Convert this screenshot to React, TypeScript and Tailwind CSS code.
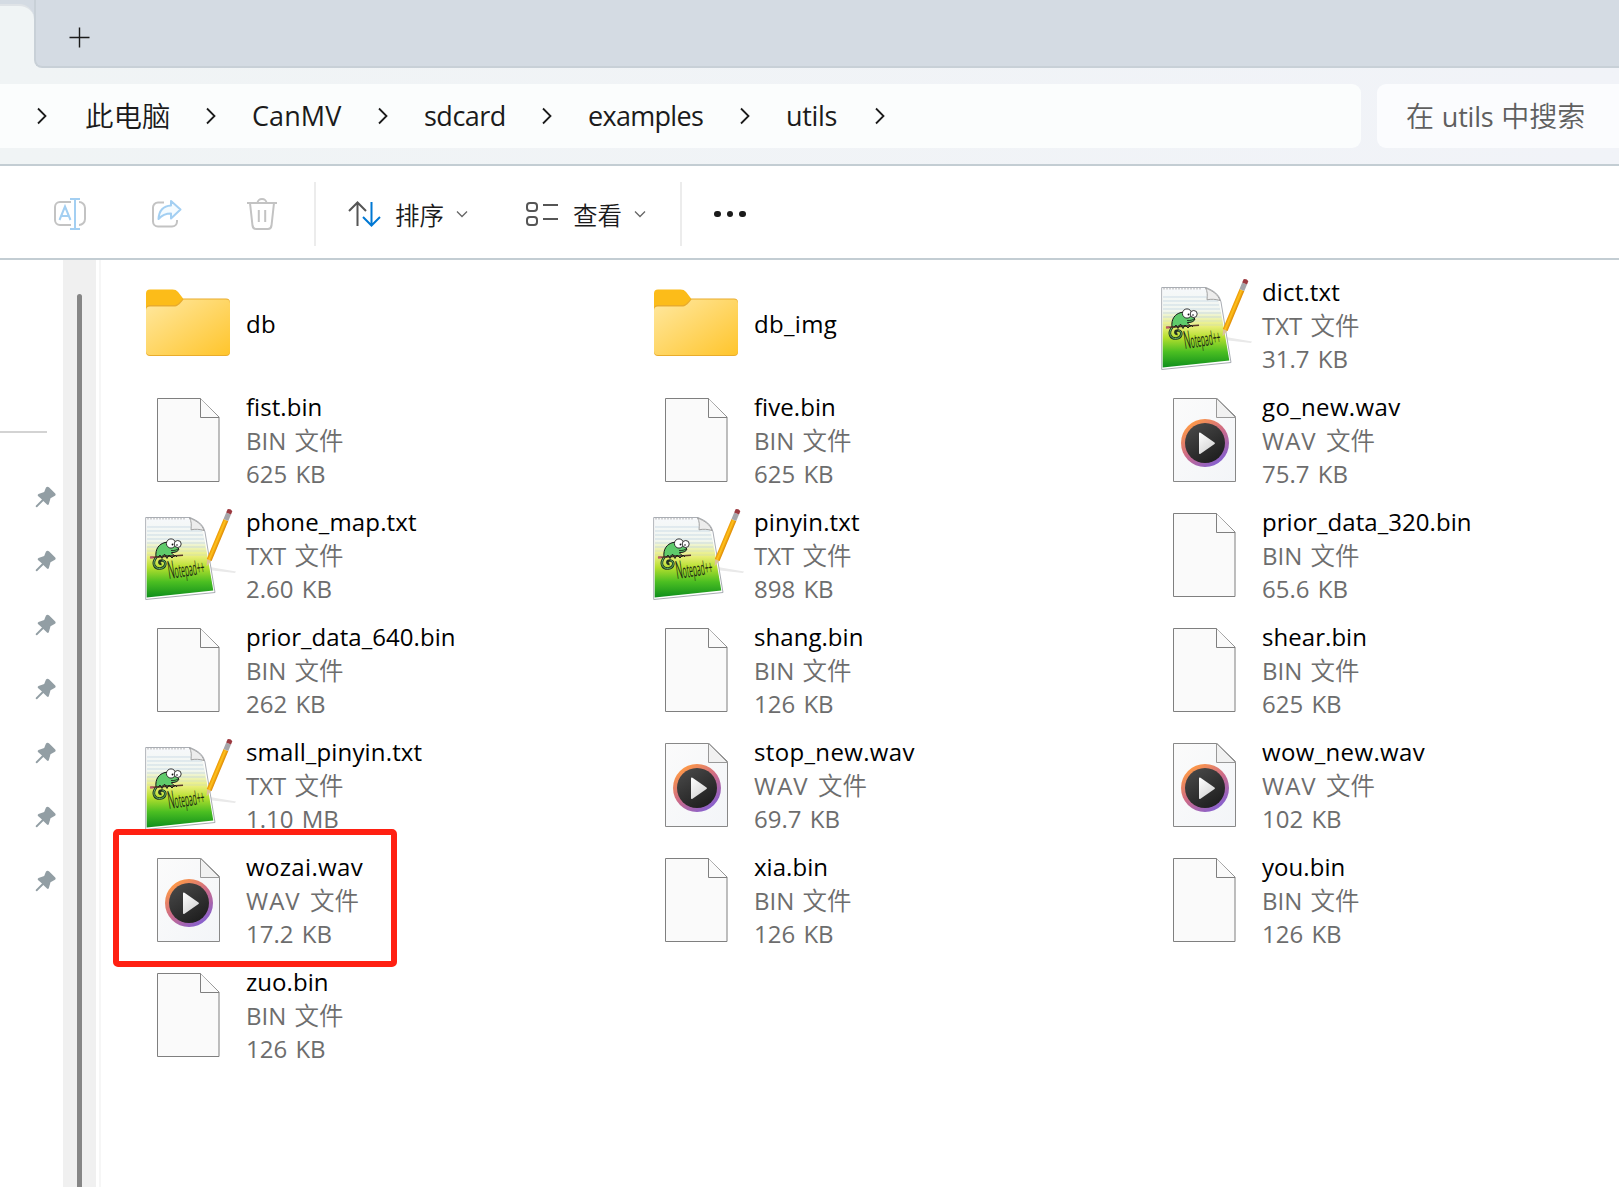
import React from "react";

const latin = "font-['Open_Sans','Noto_Sans_CJK_SC',sans-serif]";

type Kind = "folder" | "bin" | "wav" | "txt";

const files: { name: string; kind: Kind; size?: string; mark?: boolean }[] = [
  { name: "db", kind: "folder" },
  { name: "db_img", kind: "folder" },
  { name: "dict.txt", kind: "txt", size: "31.7 KB" },
  { name: "fist.bin", kind: "bin", size: "625 KB" },
  { name: "five.bin", kind: "bin", size: "625 KB" },
  { name: "go_new.wav", kind: "wav", size: "75.7 KB" },
  { name: "phone_map.txt", kind: "txt", size: "2.60 KB" },
  { name: "pinyin.txt", kind: "txt", size: "898 KB" },
  { name: "prior_data_320.bin", kind: "bin", size: "65.6 KB" },
  { name: "prior_data_640.bin", kind: "bin", size: "262 KB" },
  { name: "shang.bin", kind: "bin", size: "126 KB" },
  { name: "shear.bin", kind: "bin", size: "625 KB" },
  { name: "small_pinyin.txt", kind: "txt", size: "1.10 MB" },
  { name: "stop_new.wav", kind: "wav", size: "69.7 KB" },
  { name: "wow_new.wav", kind: "wav", size: "102 KB" },
  { name: "wozai.wav", kind: "wav", size: "17.2 KB", mark: true },
  { name: "xia.bin", kind: "bin", size: "126 KB" },
  { name: "you.bin", kind: "bin", size: "126 KB" },
  { name: "zuo.bin", kind: "bin", size: "126 KB" },
];

function Gradients() {
  return (
    <svg width="0" height="0" className="absolute">
      <defs>
        <linearGradient id="folder" x1="0" y1="0" x2="1" y2="1">
          <stop offset="0" stopColor="#ffe8a0" />
          <stop offset="1" stopColor="#ffc52c" />
        </linearGradient>
        <linearGradient id="ring" x1="0.15" y1="0.1" x2="0.75" y2="0.95">
          <stop offset="0" stopColor="#ff9a45" />
          <stop offset="0.5" stopColor="#cc6a88" />
          <stop offset="1" stopColor="#8660cf" />
        </linearGradient>
        <linearGradient id="disc" x1="0" y1="0" x2="0.6" y2="1">
          <stop offset="0" stopColor="#4c4c4c" />
          <stop offset="1" stopColor="#202020" />
        </linearGradient>
        <linearGradient id="play" x1="0" y1="0" x2="0.6" y2="1">
          <stop offset="0" stopColor="#ffffff" />
          <stop offset="1" stopColor="#d4d4d4" />
        </linearGradient>
        <linearGradient id="paper" x1="0" y1="0" x2="1" y2="1">
          <stop offset="0" stopColor="#fbfbfb" />
          <stop offset="1" stopColor="#f3f5f8" />
        </linearGradient>
        <linearGradient id="note" x1="0" y1="0" x2="0" y2="1">
          <stop offset="0" stopColor="#f6f8fb" />
          <stop offset="0.28" stopColor="#f1f6ef" />
          <stop offset="0.48" stopColor="#e8ee78" />
          <stop offset="0.62" stopColor="#b5df2e" />
          <stop offset="0.8" stopColor="#4cbf22" />
          <stop offset="1" stopColor="#0e8f1c" />
        </linearGradient>
        <linearGradient id="pencil" x1="0" y1="0" x2="1" y2="0">
          <stop offset="0" stopColor="#e89400" />
          <stop offset="0.45" stopColor="#ffc21e" />
          <stop offset="1" stopColor="#dc8600" />
        </linearGradient>
      </defs>
    </svg>
  );
}

function FolderIcon() {
  return (
    <svg width="96" height="96" viewBox="0 0 96 96">
      <path d="M6 16.500a4 4 0 0 1 4-4h22.500c2.600 0 4 .8 5.600 2.500l5 6.500L44 32H6z" fill="#fcbc19" />
      <path d="M6 32a4 4 0 0 1 4-4h24c3 0 4.500-1.500 9-6.500H86a4 4 0 0 1 4 4V75a4 4 0 0 1-4 4H10a4 4 0 0 1-4-4z" fill="#e9ac2c" />
      <path d="M6 33.500a4 4 0 0 1 4-4h24c3.500 0 5-1.500 9.500-7H86a4 4 0 0 1 4 4V74a4 4 0 0 1-4 4H10a4 4 0 0 1-4-4z" fill="url(#folder)" />
    </svg>
  );
}

function BinIcon() {
  return (
    <svg width="96" height="96" viewBox="0 0 96 96" fill="#fafafa" stroke="#7f7f7f">
      <path d="M17.500 6.500H60.500L79 25V89.500H17.500z" />
      <path d="M60.500 6.500V25.500H79" />
    </svg>
  );
}

function WavIcon() {
  return (
    <svg width="96" height="96" viewBox="0 0 96 96">
      <path d="M17.500 6.500H61L79.500 24.500V89.500H17.500z" fill="url(#paper)" stroke="#888" />
      <path d="M60.500 6.500V25.500H79.500z" fill="#f1f1f1" stroke="#999" />
      <circle cx="49" cy="51" r="24" fill="url(#ring)" />
      <circle cx="49" cy="51" r="20" fill="url(#disc)" />
      <path d="M43 41.500v19.500q0 1.600 1.500.800L58.500 52q1-.8 0-1.500L44.500 40.700q-1.500-.8-1.500.8z" fill="url(#play)" />
    </svg>
  );
}

function NotepadIcon() {
  return (
    <svg width="96" height="96" viewBox="0 0 96 96">
      <path d="M67 59.500L96 64.500 95 66 68 63z" fill="#e9e9e9" />
      <path d="M5.700 10.500H50C58 14 63 17 65 25L75 85.500 5.700 92.500z" fill="#fff" stroke="#a9adb3" strokeWidth="1" />
      <path d="M6.700 11.500H49.500C57 15 61.500 18 63.500 25.500L73.300 83.500 6.700 90.500z" fill="url(#note)" />
      <g stroke="#bcd0e0" strokeWidth="0.700">
        <path d="M7 20H51M7 24H62M7 28H63M7 32H64M7 36H65M7 40H65" />
        <path d="M7 44H66M7 48H67" opacity="0.500" />
      </g>
      <path d="M8 11v1.500M11 11v1.500M14 11v1.500M17 11v1.500M20 11v1.500M23 11v1.500M26 11v1.500M29 11v1.500M32 11v1.500M35 11v1.500M38 11v1.500M41 11v1.500M44 11v1.500" stroke="#aaa" strokeWidth="1" />
      <path d="M49.500 11C51.500 14 51.500 18 51 22.800c4-.9 9-.6 13 .7C62 17.500 57 14 49.500 11z" fill="#ededed" stroke="#999" strokeWidth="0.900" />
      <path d="M16.500 50C11 57 15 62 20.500 61.500s6.500-7.500 2-8-3.500 4-1 3.500" fill="none" stroke="#223322" strokeWidth="2.600" />
      <path d="M16.500 50C11 57 15 62 20.500 61.500s6.500-7.500 2-8" fill="none" stroke="#5fb95f" strokeWidth="1" />
      <path d="M16 50C15 42 19 37 25 35.500c3-.7 6 0 9 2l5 4.500c-1 2.800-4 3.600-7.500 3.500 1 2 2 2.500 3.500 3.500H27l-3-1.500-2 2z" fill="#5fca6b" stroke="#151515" strokeWidth="1" />
      <path d="M10 50.500L43 48.300" stroke="#5b3a2c" strokeWidth="1.600" />
      <path d="M10 50.500L13.500 50.300" stroke="#b9576a" strokeWidth="2.200" />
      <path d="M18 50.500l2-2.500 2 3.500 2.500-4 2.500 4 2-3.500 3 3 3-3 2 2" fill="none" stroke="#16231a" strokeWidth="1" />
      <path d="M31 43.500c3 .3 5.500-.3 8-2" fill="none" stroke="#151515" strokeWidth="0.800" />
      <circle cx="31" cy="36.500" r="4.600" fill="#fff" stroke="#222" strokeWidth="0.900" />
      <circle cx="37.700" cy="37" r="3.500" fill="#fff" stroke="#222" strokeWidth="0.900" />
      <circle cx="32.500" cy="37.500" r="0.900" fill="#111" />
      <circle cx="37" cy="38" r="0.800" fill="#111" />
      <text transform="translate(29 72) rotate(-8.500) scale(.36 1)" fontSize="19" textLength="102" lengthAdjust="spacingAndGlyphs" fill="#1c2a12" fontFamily="Open Sans"><tspan fontSize="25">N</tspan>otepad++</text>
      <g transform="translate(66.500 59.500) rotate(22.600)">
        <path d="M0 0L-2.500 -8H2.500z" fill="#dcc29a" />
        <path d="M-2.600 -7V-50.500H2.600V-7z" fill="url(#pencil)" />
        <path d="M-2.600 -50.500V-57.500H2.600V-50.500z" fill="#a5a5a9" />
        <path d="M-2.600 -57.500V-61q2.600-2 5.200 0V-57.500z" fill="#9c3a40" />
      </g>
    </svg>
  );
}

const icons: Record<Kind, () => React.ReactElement> = {
  folder: FolderIcon,
  bin: BinIcon,
  wav: WavIcon,
  txt: NotepadIcon,
};

const nameTracking: Record<Kind, string> = {
  folder: "tracking-[0.3px]",
  bin: "tracking-[0.05px]",
  wav: "tracking-[0.35px]",
  txt: "tracking-[0.15px]",
};

function Cell({ name, kind, size, mark }: (typeof files)[number]) {
  const Icon = icons[kind];
  return (
    <div className="relative flex h-[115px] pt-[9px]">
      <div className="size-24 shrink-0">
        <Icon />
      </div>
      <div className={`${size ? "-mt-[2px] h-[99px]" : "-mt-px h-24 pb-px"} ml-[10px] flex flex-col justify-center whitespace-nowrap text-[24px] leading-[33px] [font-kerning:none] [word-spacing:2px] text-[#6d6d6d]`}>
        <div className={`${size ? "h-[34px]" : "h-[33px]"} ${nameTracking[kind]} text-black`}>{name}</div>
        {size && (
          <div className="h-[33px]">
            <span className={kind === "wav" ? "tracking-[1px]" : ""}>{kind.toUpperCase()} </span>
            <span className="text-[24.5px] font-[350]">文件</span>
          </div>
        )}
        {size && <div className="h-8">{size}</div>}
      </div>
      {mark && <div className="absolute -left-[27px] -top-[14px] h-[138px] w-[284px] rounded-[5px] border-[6px] border-[#ff2012]" />}
    </div>
  );
}

function Chevron() {
  return (
    <svg width="10" height="18" viewBox="0 0 10 18" fill="none" stroke="#1b1b1b" strokeWidth="1.800" className="shrink-0">
      <path d="M1 1.500L8.500 9 1 16.500" />
    </svg>
  );
}

function Down() {
  return (
    <svg width="12" height="8" viewBox="0 0 12 8" fill="none" stroke="#666" strokeWidth="1.300">
      <path d="M1 1.500L6 6.500 11 1.500" />
    </svg>
  );
}

function Pin() {
  return (
    <svg width="22" height="22" viewBox="0 0 22 22" fill="#929ea4">
      <path d="M11 1.500Q12.500 0 14.200 1.500L20 7.200Q21.500 9 19.500 10L15.500 12.200 13.800 18.200Q13 19.500 12 18.500L8.300 15 2 21.200.8 21 .8 19.800 7 13.500 3 10Q2 8.800 3.500 8L9.200 6z" />
    </svg>
  );
}

const crumbs = [
  { text: "此电脑", style: "w-[169px] pl-[38px] text-[28.5px] font-[350]" },
  { text: "CanMV", style: "w-[172px] pl-[36px] text-[27px] tracking-[0.1px]" },
  { text: "sdcard", style: "w-[164px] pl-[36px] text-[27px] tracking-[-0.5px]" },
  { text: "examples", style: "w-[198px] pl-[36px] text-[27px] tracking-[-0.7px]" },
  { text: "utils", style: "w-[135px] pl-[36px] text-[27px] tracking-[-0.3px]" },
];

export default function App() {
  return (
    <div className={`${latin} flex h-[1187px] w-[1619px] flex-col overflow-hidden bg-white`}>
      <Gradients />
      <header className="h-[166px] shrink-0 border-b-2 border-[#c3cdd3] bg-gradient-to-r from-[#f0f4f5] to-[#f1f3f8]">
        <div className="flex h-[68px] bg-[#f0f4f5]">
          <div className="h-full w-[34px] bg-gradient-to-b from-[#d4dbe3] from-50% to-[#f0f4f5] to-50%">
            <div className="h-1" />
            <div className="h-16 w-full rounded-tr-[15px] border-t-2 border-[#dfe3e7] bg-[#f0f4f5]" />
          </div>
          <div className="flex-1 rounded-bl-[8px] border-b-2 border-l-2 border-[#c8d0d7] bg-[#d4dbe3] pl-[33px] pt-[27px]">
            <svg width="21" height="21" viewBox="0 0 21 21" stroke="#1b1b1b" strokeWidth="1.400">
              <path d="M.5 10.500H20.500M10.500 .5V20.500" />
            </svg>
          </div>
        </div>
        <div className="mt-4 flex h-16 gap-4">
          <nav className="flex h-16 w-[1361px] items-center rounded-r-[9px] bg-[#fbfdfd] pl-[37px]">
            <Chevron />
            {crumbs.map((c) => (
              <div key={c.text} className={`${c.style} flex h-10 items-center justify-between whitespace-nowrap text-[#1b1b1b]`}>
                <span>{c.text}</span>
                <Chevron />
              </div>
            ))}
          </nav>
          <div className="flex flex-1 items-center rounded-l-[9px] bg-[#fbfcfe] pl-[29px] pt-px text-[28px] text-[#5f5f5f]">
            <span className="whitespace-nowrap font-[350]">在<span className="text-[27px] font-normal tracking-[-0.2px] [word-spacing:1px]"> utils </span>中搜索</span>
          </div>
        </div>
      </header>

      <div className="flex h-[94px] shrink-0 items-center border-b-2 border-[#c3cdd3] pl-[54px] pt-1">
        <svg width="32" height="32" viewBox="0 0 32 32" fill="none" strokeWidth="2">
          <path d="M17 4H6a5 5 0 0 0-5 5V22a5 5 0 0 0 5 5H17M25 4a6 6 0 0 1 6 6V21a6 6 0 0 1-6 6" stroke="#c3c3c3" />
          <path d="M16 1H26M16 31H26M21 1V31M5.500 22L11 8.500 16.500 22M7.500 18H14.500" stroke="#a3cff2" />
        </svg>
        <svg width="30" height="30" viewBox="0 0 30 30" fill="none" strokeWidth="2" strokeLinejoin="round" className="ml-[66px]">
          <path d="M12 3.500H6A5 5 0 0 0 1 8.500V22.500A5 5 0 0 0 6 27.500H20A5 5 0 0 0 25 22.500V21" stroke="#c3c3c3" />
          <path d="M19 2L28.500 10.500 19 19.500V14.500C13 14.500 10 16 6.500 20 7 12 11 7 19 6.500z" stroke="#a3cff2" fill="#f4fbff" />
        </svg>
        <svg width="30" height="32" viewBox="0 0 30 32" fill="none" stroke="#c3c3c3" strokeWidth="2" className="ml-[65px]">
          <path d="M0 5H30M10.500 5a4.500 4 0 0 1 9 0M3 5L5.500 27.500Q6 31 9 31H21Q24 31 24.500 27.500L27 5M11.800 12V24M18.200 12V24" />
        </svg>
        <div className="ml-[37px] h-[64px] w-[2px] bg-[#ececec]" />
        <svg width="33" height="26" viewBox="0 0 33 26" fill="none" strokeWidth="2" className="ml-[32px]">
          <path d="M9.500 25V1.500M1 10L9.500 1.500 18 10" stroke="#555" />
          <path d="M23.500 1V24.500M15 16L23.500 24.500 32 16" stroke="#0078d4" />
        </svg>
        <span className="ml-[14px] w-[50px] whitespace-nowrap pt-1 text-[24.5px] font-[350] text-[#1b1b1b]">排序</span>
        <span className="ml-[11px]"><Down /></span>
        <svg width="33" height="26" viewBox="0 0 33 26" fill="none" stroke="#555" strokeWidth="2" className="ml-[57px]">
          <rect x="2" y="2" width="10" height="8" rx="3" />
          <rect x="2" y="16" width="10" height="8" rx="3" />
          <path d="M18 4H33M18 18H33" />
        </svg>
        <span className="ml-[15px] w-[50px] whitespace-nowrap pt-1 text-[24.5px] font-[350] text-[#1b1b1b]">查看</span>
        <span className="ml-[11px]"><Down /></span>
        <div className="ml-[34px] h-[64px] w-[2px] bg-[#ececec]" />
        <div className="ml-[32px] flex gap-[6px]">
          <i className="size-[6.500px] rounded-full bg-[#1b1b1b]" />
          <i className="size-[6.500px] rounded-full bg-[#1b1b1b]" />
          <i className="size-[6.500px] rounded-full bg-[#1b1b1b]" />
        </div>
      </div>

      <div className="flex min-h-0 flex-1">
        <aside className="w-[63px] shrink-0">
          <div className="mt-[171px] h-[2px] w-[47px] bg-[#d3d3d3]" />
          <div className="mt-[53px] flex flex-col gap-[42px] pl-[35px]">
            {[0, 1, 2, 3, 4, 5, 6].map((i) => <Pin key={i} />)}
          </div>
        </aside>
        <div className="w-[33px] shrink-0 bg-[#f0f0f0] pl-[14px] pt-[34px]">
          <div className="h-full w-[5px] rounded-t-full bg-[#868686]" />
        </div>
        <div className="ml-[3px] w-[2px] shrink-0 bg-[#f6f6f6]" />
        <main className="grid shrink-0 auto-rows-[115px] grid-cols-[508px_508px_508px] pl-[39px] pt-2">
          {files.map((f) => <Cell key={f.name} {...f} />)}
        </main>
      </div>
    </div>
  );
}
